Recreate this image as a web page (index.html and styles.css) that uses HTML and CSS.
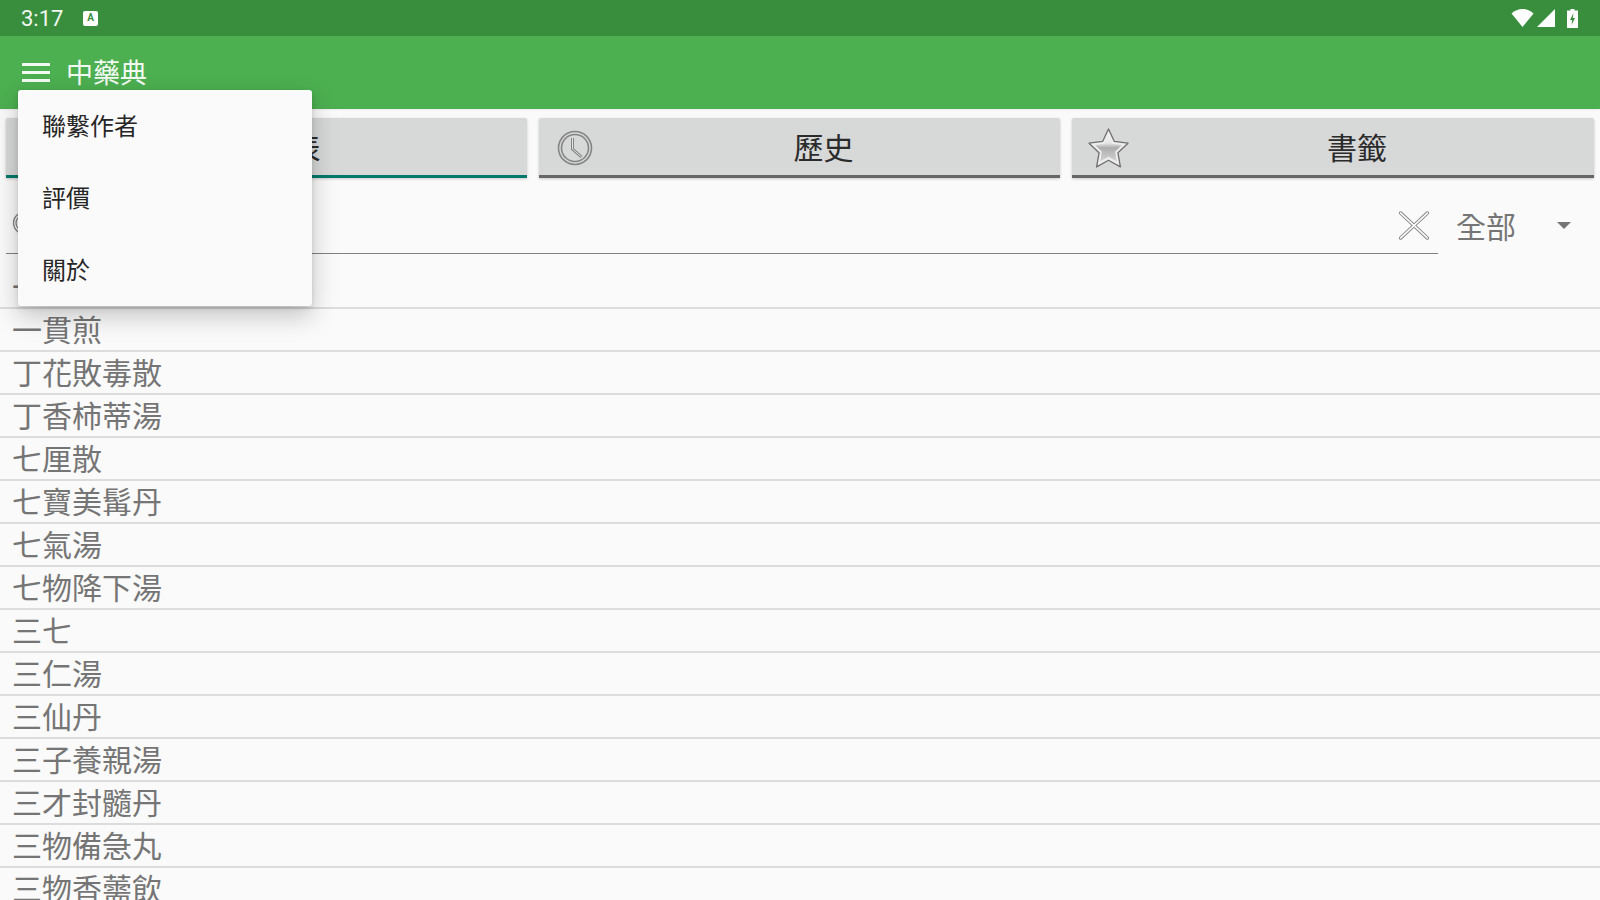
FILE: index.html
```html
<!DOCTYPE html>
<html lang="zh-Hant">
<head>
<meta charset="utf-8">
<title>中藥典</title>
<link rel="stylesheet" href="styles.css">
</head>
<body>
<div class="screen">
  <header class="statusbar">
    <span class="time">3:17</span>
    <span class="keyboard-badge">A</span>
    <span class="status-spacer"></span>
    <svg class="wifi" viewBox="0 0 22 18"><path d="M0 4.500C3 1.600 7 0 11 0s8 1.600 11 4.500L11 18z" fill="#fff"/></svg>
    <svg class="signal" viewBox="0 0 18 18"><path d="M18 0v18H0z" fill="#fff"/></svg>
    <svg class="battery" viewBox="0 0 11 19"><path d="M3.500 0h4v1.500H11V19H0V1.500h3.500z" fill="#fff"/><path d="M6.500 4 3 11h2.200L4.500 16 8 9H5.800z" fill="#388e3c"/></svg>
  </header>
  <div class="toolbar">
    <svg class="hamburger" viewBox="0 0 28 19"><path d="M0 1.500h28M0 9.500h28M0 17.500h28" stroke="#f2f8f2" stroke-width="3" fill="none"/></svg>
    <span class="title">中藥典</span>
  </div>
  <nav class="tabs">
    <div class="tab tab-active">
      <span class="tab-icon"></span>
      <span class="tab-label">列表</span>
    </div>
    <div class="tab">
      <svg class="tab-icon" viewBox="0 0 36 36">
        <circle cx="18" cy="18" r="16.500" fill="none" stroke="#858585" stroke-width="1.600"/>
        <circle cx="18" cy="18" r="13.500" fill="none" stroke="#858585" stroke-width="1.600"/>
        <path d="M15.500 8v11l9 8" fill="none" stroke="#858585" stroke-width="3"/>
        <path d="M15.500 8v11l9 8" fill="none" stroke="#e2e3e3" stroke-width="1"/>
      </svg>
      <span class="tab-label">歷史</span>
    </div>
    <div class="tab tab-star">
      <svg class="tab-icon" viewBox="0 0 40 40">
        <defs>
          <linearGradient id="star-fill" x1="0" y1="0" x2="0" y2="1">
            <stop offset="0" stop-color="#f2f2f2"/>
            <stop offset="0.300" stop-color="#e6e6e6"/>
            <stop offset="0.480" stop-color="#adadad"/>
            <stop offset="1" stop-color="#d4d4d4"/>
          </linearGradient>
        </defs>
        <path d="M20 1l5.600 12 13.400 1.800-9.800 9.400 2.400 13.800L20 31.500 8.400 38l2.400-13.800L1 14.800 14.400 13z" fill="#eee" stroke="#707070" stroke-width="1.300" stroke-linejoin="round"/>
        <path d="M20 7l4 8.400 9.200 1.300-6.700 6.500 1.600 9.500L20 28l-8.100 4.700 1.600-9.500-6.700-6.500 9.200-1.300z" fill="url(#star-fill)"/>
      </svg>
      <span class="tab-label">書籤</span>
    </div>
  </nav>
  <div class="searchbar">
    <div class="search-field">
      <svg class="search-icon" viewBox="0 0 24 24">
        <circle cx="12" cy="12" r="10.500" fill="none" stroke="#858585" stroke-width="1.300"/>
        <circle cx="12" cy="12" r="8" fill="none" stroke="#858585" stroke-width="1.300"/>
      </svg>
      <span class="status-spacer"></span>
      <svg class="clear-icon" viewBox="0 0 36 34">
        <path d="M3 3l30 28M33 3 3 31" stroke="#808080" stroke-width="4" stroke-linecap="round" fill="none"/>
        <path d="M3 3l30 28M33 3 3 31" stroke="#fafafa" stroke-width="2" stroke-linecap="round" fill="none"/>
      </svg>
    </div>
    <div class="filter">
      <span class="filter-label">全部</span>
      <span class="filter-arrow"></span>
    </div>
  </div>
  <ul class="list">
    <li class="row">一捻金</li>
    <li class="row">一貫煎</li>
    <li class="row">丁花敗毒散</li>
    <li class="row">丁香柿蒂湯</li>
    <li class="row">七厘散</li>
    <li class="row">七寶美髯丹</li>
    <li class="row">七氣湯</li>
    <li class="row">七物降下湯</li>
    <li class="row">三七</li>
    <li class="row">三仁湯</li>
    <li class="row">三仙丹</li>
    <li class="row">三子養親湯</li>
    <li class="row">三才封髓丹</li>
    <li class="row">三物備急丸</li>
    <li class="row">三物香薷飲</li>
  </ul>
  <div class="menu">
    <div class="menu-item">聯繫作者</div>
    <div class="menu-item">評價</div>
    <div class="menu-item">關於</div>
  </div>
</div>
</body>
</html>
```
FILE: styles.css
```css
* { box-sizing: border-box; }
html, body { margin: 0; padding: 0; }
body {
  background: #fafafa;
  font-family: "Noto Sans CJK TC", "Noto Sans", sans-serif;
}
.screen {
  position: relative;
  width: 1600px;
  height: 900px;
  overflow: hidden;
  background: #fafafa;
}
.statusbar {
  display: flex;
  align-items: center;
  height: 36px;
  padding: 0 22px 0 21px;
  background: #388e3c;
  color: #fff;
}
.time {
  width: 62px;
  padding-top: 1px;
  font: 22px/1 Roboto, sans-serif;
  color: #f1f6f1;
}
.keyboard-badge {
  display: flex;
  align-items: center;
  justify-content: center;
  width: 15px;
  height: 15px;
  border-radius: 2px;
  background: #fff;
  color: #388e3c;
  font: bold 10px/1 Roboto, sans-serif;
}
.status-spacer { flex: 1; }
.wifi { width: 23px; height: 18px; margin-right: 3px; }
.signal { width: 18px; height: 18px; margin-right: 12px; }
.battery { width: 11px; height: 19px; }
.toolbar {
  display: flex;
  align-items: center;
  height: 73px;
  padding: 0 0 0 22px;
  background: #4caf50;
  box-shadow: 0 1px 2px rgba(0, 0, 0, 0.06);
}
.hamburger { width: 28px; height: 19px; margin-right: 16px; }
.title {
  font-size: 27px;
  line-height: 40px;
  margin-top: -2px;
  color: #f2f8f2;
}
.tabs {
  display: grid;
  grid-template-columns: 521px 521px 1fr;
  gap: 12px;
  padding: 9px 6px 0;
}
.tab {
  display: flex;
  align-items: center;
  height: 60px;
  padding: 0 6px 0 18px;
  background: #d7d8d8;
  border-bottom: 3px solid #666;
  border-radius: 2px 2px 0 0;
  box-shadow: 0 1px 3px rgba(0, 0, 0, 0.2);
}
.tab-active { border-bottom-color: #00796b; }
.tab-star { padding: 0 9px 0 16px; }
.tab-icon { flex: none; width: 36px; height: 36px; margin-top: 3px; }
.tab-star .tab-icon { width: 41px; height: 41px; }
.tab-label {
  flex: 1;
  text-align: center;
  font-size: 30px;
  line-height: 40px;
  color: #2b2b2b;
  margin-top: -1px;
}
.searchbar {
  display: flex;
  height: 76px;
  padding-left: 6px;
}
.search-field {
  display: flex;
  align-items: center;
  width: 1432px;
  border-bottom: 1.500px solid #808080;
  padding: 20px 7px 0 6px;
}
.search-icon { width: 24px; height: 24px; margin-top: -6px; }
.clear-icon { width: 32px; height: 31px; margin-right: 1px; }
.filter {
  flex: 1;
  display: flex;
  align-items: center;
  padding: 17px 29px 0 18px;
}
.filter-label {
  flex: 1;
  font-size: 30px;
  line-height: 40px;
  color: #757575;
}
.filter-arrow {
  width: 0;
  height: 0;
  border-left: 7px solid transparent;
  border-right: 7px solid transparent;
  border-top: 7px solid #757575;
  margin-top: 2px;
}
.list {
  list-style: none;
  margin: 12px 0 0;
  padding: 0;
}
.row {
  height: 43px;
  padding-left: 12px;
  border-bottom: 2px solid #dcdcdc;
  font-size: 30px;
  line-height: 39px;
  color: #757575;
  white-space: nowrap;
}
.menu {
  position: absolute;
  left: 18px;
  top: 90px;
  width: 294px;
  height: 216px;
  border-radius: 3px;
  background: #fafafa;
  box-shadow: 0 10px 26px rgba(0, 0, 0, 0.22), 0 2px 5px rgba(0, 0, 0, 0.12);
}
.menu-item {
  height: 72px;
  padding-left: 24px;
  font-size: 24px;
  line-height: 70px;
  color: #262626;
}
```
